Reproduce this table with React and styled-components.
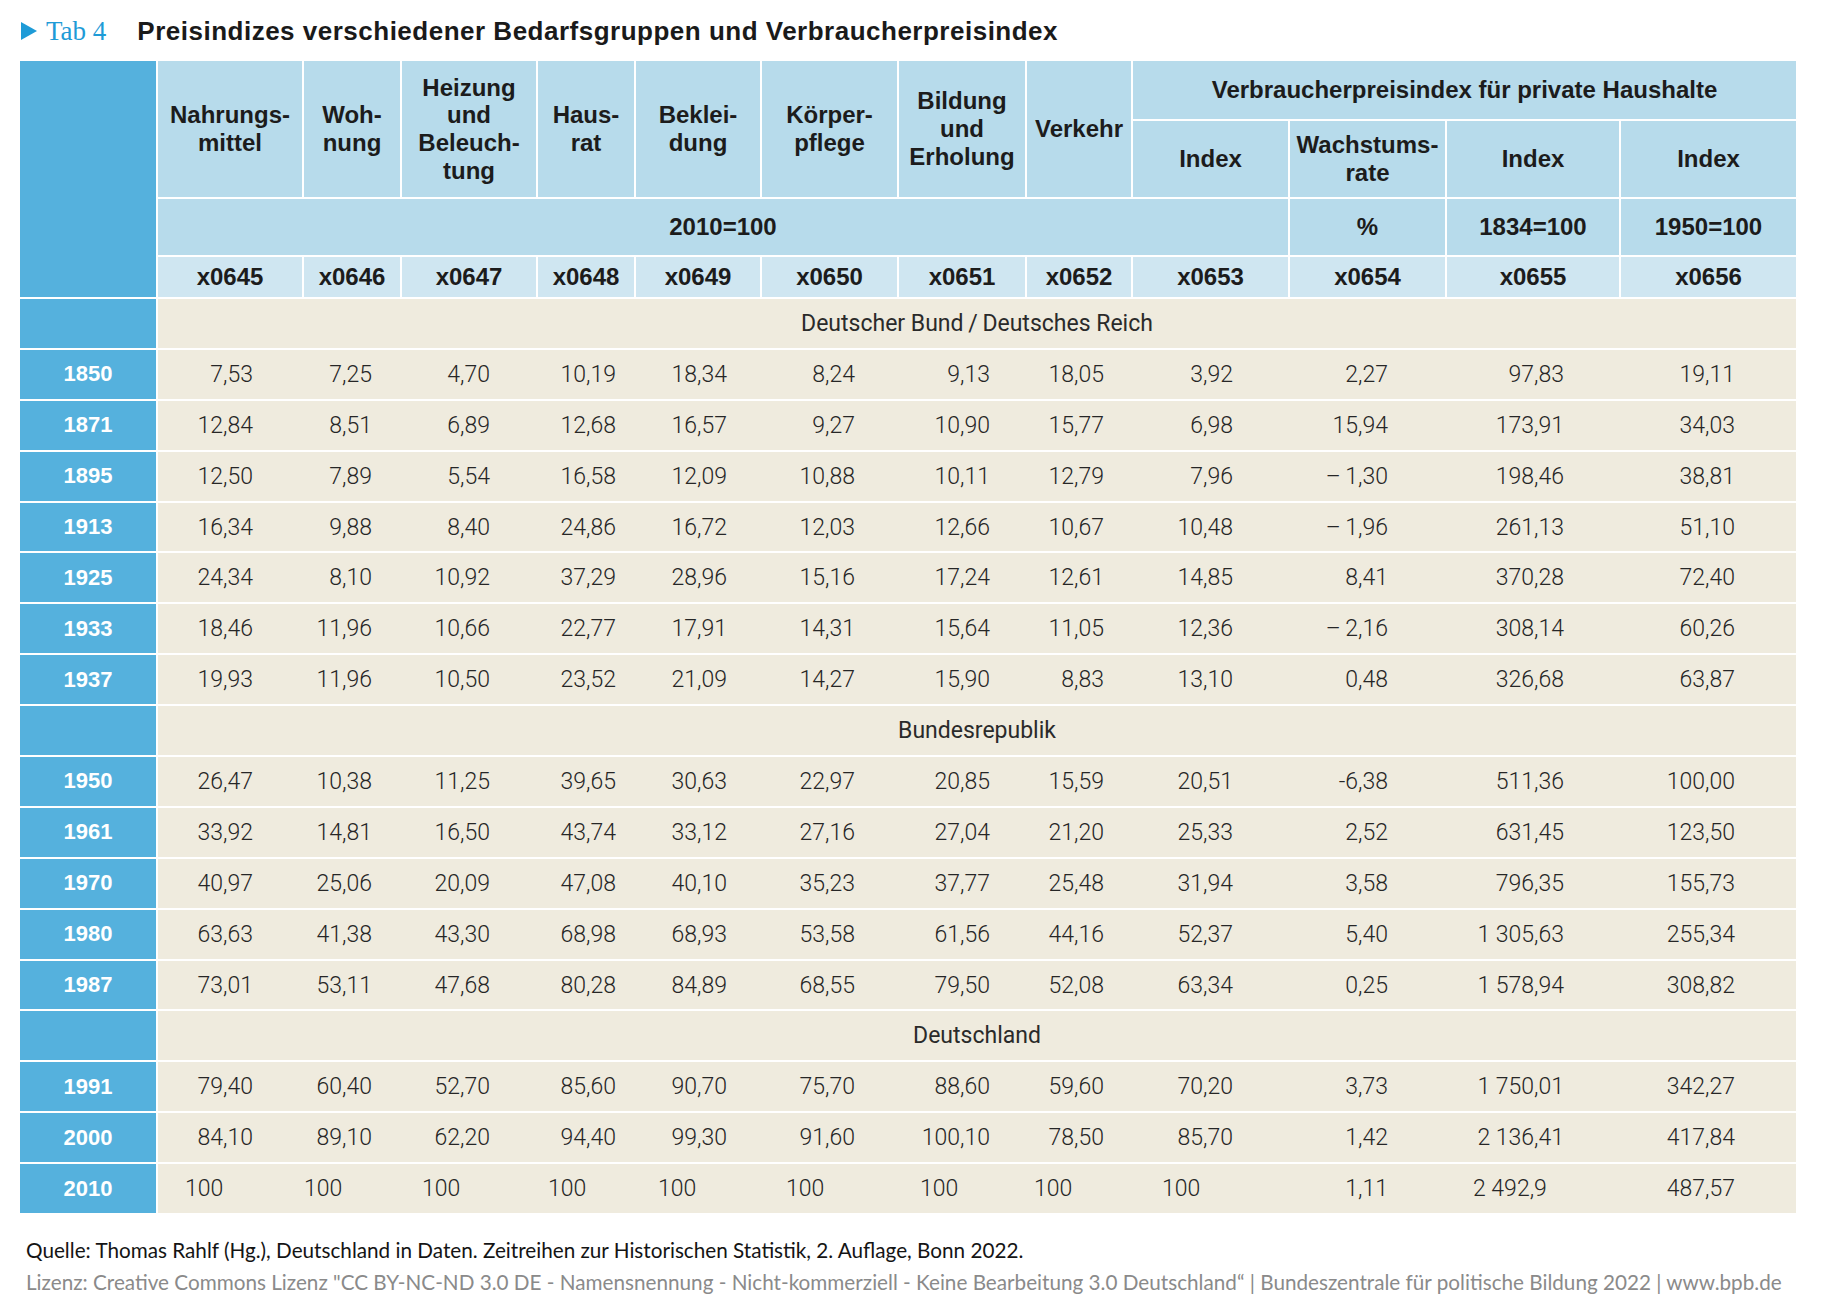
import React from "react";
import styled, { createGlobalStyle } from "styled-components";

const GlobalStyle = createGlobalStyle`
  html, body { margin: 0; padding: 0; background: #ffffff; }
  body { font-family: "Liberation Sans", Arial, sans-serif; color: #1a1a1a; }
`;

const COLS = [144, 96, 134, 96, 124, 135, 126, 104, 155, 155, 172, 175];
const PAD = [49, 28, 46, 18, 33, 42, 35, 27, 55, 57, 55, 61];
const GRID = `136px ${COLS.map((c) => c + "px").join(" ")}`;

const YEAR_BLUE = "#55b1dd";
const HEAD_BLUE = "#b7dbeb";
const CODE_BLUE = "#cfe6f1";
const BEIGE = "#efebde";

const Page = styled.div`
  padding: 13px 0 0 20px;
  width: 1776px;
`;

const TitleBar = styled.div`
  display: flex;
  align-items: baseline;
  height: 36px;
  margin-bottom: 12px;
`;

const Arrow = styled.svg`
  align-self: center;
  flex: none;
  margin-left: 1px;
`;

const TabLabel = styled.span`
  margin-left: 9px;
  font-family: "Liberation Serif", "Times New Roman", serif;
  font-size: 27px;
  line-height: 36px;
  color: #1e9bd7;
`;

const TitleText = styled.h1`
  margin: 0 0 0 31px;
  font-family: "Liberation Sans", Arial, sans-serif;
  font-weight: 700;
  font-size: 26px;
  letter-spacing: 0.5px;
  line-height: 36px;
  color: #1a1a1a;
`;

const Table = styled.div`
  display: flex;
  flex-direction: column;
  gap: 2px;
  background: #ffffff;
`;

const HeaderGrid = styled.div`
  display: grid;
  grid-template-columns: ${GRID};
  grid-template-rows: 58px 76px 56px 40px;
  gap: 2px;
`;

const tones = {
  year: YEAR_BLUE,
  head: HEAD_BLUE,
  code: CODE_BLUE,
};

const HeadCell = styled.div`
  grid-column: ${(p) => p.$col};
  grid-row: ${(p) => p.$row};
  background: ${(p) => tones[p.$tone || "head"]};
  display: flex;
  align-items: center;
  justify-content: center;
  text-align: center;
  font-family: "Liberation Sans", Arial, sans-serif;
  font-weight: 700;
  font-size: 24px;
  line-height: 27.7px;
  color: #1c1c1c;
`;

const DataRow = styled.div`
  display: grid;
  grid-template-columns: 136px 1fr;
  column-gap: 2px;
  height: 48.9px;
`;

const YearCell = styled.div`
  background: ${YEAR_BLUE};
  display: flex;
  align-items: center;
  justify-content: center;
  font-family: "Liberation Sans", Arial, sans-serif;
  font-weight: 700;
  font-size: 22px;
  color: #ffffff;
`;

const Values = styled.div`
  display: grid;
  grid-template-columns: ${COLS.map((c) => c + "px").join(" ")};
  column-gap: 2px;
  align-items: center;
  background: ${BEIGE};
`;

const Value = styled.div`
  text-align: ${(p) => (p.$left != null ? "left" : "right")};
  padding-left: ${(p) => (p.$left != null ? p.$left : 0)}px;
  padding-right: ${(p) => (p.$left != null ? 0 : p.$pad)}px;
  font-family: Roboto, "Liberation Sans", Arial, sans-serif;
  font-weight: 300;
  font-size: 23px;
  color: #262626;
  white-space: nowrap;
`;

const SectionBand = styled.div`
  background: ${BEIGE};
  display: flex;
  align-items: center;
  justify-content: center;
  font-family: Roboto, "Liberation Sans", Arial, sans-serif;
  font-weight: 400;
  font-size: 23px;
  color: #2a2a2a;
`;

const Footer = styled.div`
  margin-top: 24px;
  padding-left: 6px;
  font-family: Lato, "Liberation Sans", Arial, sans-serif;
  font-size: 20.7px;
  line-height: 26px;
`;

const Source = styled.div`
  color: #141414;
`;

const License = styled.div`
  margin-top: 6px;
  color: #8a8a8a;
`;

const mainHeads = [
  ["Nahrungs-", "mittel"],
  ["Woh-", "nung"],
  ["Heizung", "und", "Beleuch-", "tung"],
  ["Haus-", "rat"],
  ["Beklei-", "dung"],
  ["Körper-", "pflege"],
  ["Bildung", "und", "Erholung"],
  ["Verkehr"],
];

const subHeads = [["Index"], ["Wachstums-", "rate"], ["Index"], ["Index"]];

const codes = [
  "x0645", "x0646", "x0647", "x0648", "x0649", "x0650",
  "x0651", "x0652", "x0653", "x0654", "x0655", "x0656",
];

const NEG = "\u2013\u2009";

const sections = [
  {
    title: "Deutscher Bund\u2009/\u2009Deutsches Reich",
    rows: [
      ["1850", ["7,53", "7,25", "4,70", "10,19", "18,34", "8,24", "9,13", "18,05", "3,92", "2,27", "97,83", "19,11"]],
      ["1871", ["12,84", "8,51", "6,89", "12,68", "16,57", "9,27", "10,90", "15,77", "6,98", "15,94", "173,91", "34,03"]],
      ["1895", ["12,50", "7,89", "5,54", "16,58", "12,09", "10,88", "10,11", "12,79", "7,96", NEG + "1,30", "198,46", "38,81"]],
      ["1913", ["16,34", "9,88", "8,40", "24,86", "16,72", "12,03", "12,66", "10,67", "10,48", NEG + "1,96", "261,13", "51,10"]],
      ["1925", ["24,34", "8,10", "10,92", "37,29", "28,96", "15,16", "17,24", "12,61", "14,85", "8,41", "370,28", "72,40"]],
      ["1933", ["18,46", "11,96", "10,66", "22,77", "17,91", "14,31", "15,64", "11,05", "12,36", NEG + "2,16", "308,14", "60,26"]],
      ["1937", ["19,93", "11,96", "10,50", "23,52", "21,09", "14,27", "15,90", "8,83", "13,10", "0,48", "326,68", "63,87"]],
    ],
  },
  {
    title: "Bundesrepublik",
    rows: [
      ["1950", ["26,47", "10,38", "11,25", "39,65", "30,63", "22,97", "20,85", "15,59", "20,51", "-6,38", "511,36", "100,00"]],
      ["1961", ["33,92", "14,81", "16,50", "43,74", "33,12", "27,16", "27,04", "21,20", "25,33", "2,52", "631,45", "123,50"]],
      ["1970", ["40,97", "25,06", "20,09", "47,08", "40,10", "35,23", "37,77", "25,48", "31,94", "3,58", "796,35", "155,73"]],
      ["1980", ["63,63", "41,38", "43,30", "68,98", "68,93", "53,58", "61,56", "44,16", "52,37", "5,40", "1 305,63", "255,34"]],
      ["1987", ["73,01", "53,11", "47,68", "80,28", "84,89", "68,55", "79,50", "52,08", "63,34", "0,25", "1 578,94", "308,82"]],
    ],
  },
  {
    title: "Deutschland",
    rows: [
      ["1991", ["79,40", "60,40", "52,70", "85,60", "90,70", "75,70", "88,60", "59,60", "70,20", "3,73", "1 750,01", "342,27"]],
      ["2000", ["84,10", "89,10", "62,20", "94,40", "99,30", "91,60", "100,10", "78,50", "85,70", "1,42", "2 136,41", "417,84"]],
      ["2010", [
        { v: "100", left: 27 }, { v: "100", left: 0 }, { v: "100", left: 20 },
        { v: "100", left: 10 }, { v: "100", left: 22 }, { v: "100", left: 24 },
        { v: "100", left: 21 }, { v: "100", left: 7 }, { v: "100", left: 29 },
        "1,11", { v: "2 492,9", left: 26 }, "487,57",
      ]],
    ],
  },
];

const Lines = ({ lines }) =>
  lines.map((l, i) => (
    <React.Fragment key={i}>
      {i > 0 && <br />}
      {l}
    </React.Fragment>
  ));

export default function App() {
  return (
    <>
      <GlobalStyle />
      <Page>
        <TitleBar>
          <Arrow width="16" height="18" viewBox="0 0 16 18">
            <polygon points="0,0 16,9 0,18" fill="#1e9bd7" />
          </Arrow>
          <TabLabel>Tab 4</TabLabel>
          <TitleText>Preisindizes verschiedener Bedarfsgruppen und Verbraucherpreisindex</TitleText>
        </TitleBar>

        <Table>
          <HeaderGrid>
            <HeadCell $tone="year" $col="1" $row="1 / span 4" />
            {mainHeads.map((h, i) => (
              <HeadCell key={i} $col={`${i + 2}`} $row="1 / span 2">
                <div><Lines lines={h} /></div>
              </HeadCell>
            ))}
            <HeadCell $col="10 / span 4" $row="1">
              Verbraucherpreisindex für private Haushalte
            </HeadCell>
            {subHeads.map((h, i) => (
              <HeadCell key={i} $col={`${i + 10}`} $row="2">
                <div><Lines lines={h} /></div>
              </HeadCell>
            ))}
            <HeadCell $col="2 / span 9" $row="3">2010=100</HeadCell>
            <HeadCell $col="11" $row="3">%</HeadCell>
            <HeadCell $col="12" $row="3">1834=100</HeadCell>
            <HeadCell $col="13" $row="3">1950=100</HeadCell>
            {codes.map((c, i) => (
              <HeadCell key={c} $tone="code" $col={`${i + 2}`} $row="4">
                {c}
              </HeadCell>
            ))}
          </HeaderGrid>

          {sections.map((s) => (
            <React.Fragment key={s.title}>
              <DataRow>
                <YearCell />
                <SectionBand>{s.title}</SectionBand>
              </DataRow>
              {s.rows.map(([year, vals]) => (
                <DataRow key={year}>
                  <YearCell>{year}</YearCell>
                  <Values>
                    {vals.map((v, i) =>
                      typeof v === "string" ? (
                        <Value key={i} $pad={PAD[i]}>{v}</Value>
                      ) : (
                        <Value key={i} $left={v.left}>{v.v}</Value>
                      )
                    )}
                  </Values>
                </DataRow>
              ))}
            </React.Fragment>
          ))}
        </Table>

        <Footer>
          <Source>
            Quelle: Thomas Rahlf (Hg.), Deutschland in Daten. Zeitreihen zur Historischen Statistik, 2. Auflage, Bonn 2022.
          </Source>
          <License>
            Lizenz: Creative Commons Lizenz "CC BY-NC-ND 3.0 DE - Namensnennung - Nicht-kommerziell - Keine Bearbeitung 3.0 Deutschland“ | Bundeszentrale für politische Bildung 2022 | www.bpb.de
          </License>
        </Footer>
      </Page>
    </>
  );
}
